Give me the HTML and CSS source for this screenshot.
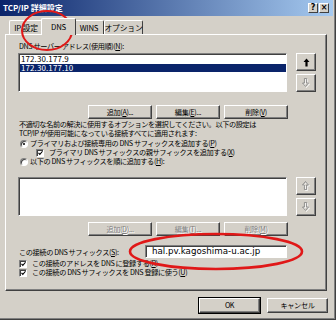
FILE: index.html
```html
<!DOCTYPE html>
<html lang="ja">
<head>
<meta charset="utf-8">
<link rel="stylesheet" href="styles.css">
</head>
<body>
<div class="dialog">
  <div class="titlebar">
    <span class="title">TCP/IP 詳細設定</span>
    <div class="tb-btns"><span class="tb-btn">?</span><span class="tb-btn">×</span></div>
  </div>
  <div class="tabs">
    <div class="tab t1">IP 設定</div>
    <div class="tab t2 active">DNS</div>
    <div class="tab t3">WINS</div>
    <div class="tab t4">オプション</div>
  </div>
  <div class="panel">
    <div class="label">DNS サーバー アドレス(使用順)(<u>N</u>):</div>
    <div class="listrow">
      <div class="listbox">
        <div class="item">172.30.177.9</div>
        <div class="item sel">172.30.177.10</div>
      </div>
      <div class="updown">
        <div class="arrow"><svg width="7" height="9" viewBox="0 0 7 9"><path d="M3.5 0.5 L6.5 4 H4.6 V8.5 H2.4 V4 H0.5 Z" fill="#000"/></svg></div>
        <div class="arrow dis"><svg width="8" height="10" viewBox="0 0 8 10"><path d="M3.5 8.5 L6.5 5 H4.6 V0.5 H2.4 V5 H0.5 Z" transform="translate(1 1)" fill="none" stroke="#fff" stroke-width="0.8"/><path d="M3.5 8.5 L6.5 5 H4.6 V0.5 H2.4 V5 H0.5 Z" fill="none" stroke="#808080" stroke-width="0.8"/></svg></div>
      </div>
    </div>
    <div class="btnrow">
      <div class="btn">追加(<u>A</u>)...</div>
      <div class="btn">編集(<u>E</u>)...</div>
      <div class="btn">削除(<u>V</u>)</div>
    </div>
    <p class="desc">不適切な名前の解決に使用するオプションを選択してください。以下の設定は<br>TCP/IP が使用可能になっている接続すべてに適用されます:</p>
    <div class="opt"><span class="radio on"></span>プライマリおよび接続専用の DNS サフィックスを追加する(<u>P</u>)</div>
    <div class="opt sub"><span class="check"><svg width="6" height="6" viewBox="0 0 6 6"><polyline points="0.6,2.8 2.2,4.6 5.4,0.9" fill="none" stroke="#000" stroke-width="1.3"/></svg></span>プライマリ DNS サフィックスの親サフィックスを追加する(<u>X</u>)</div>
    <div class="opt"><span class="radio"></span>以下の DNS サフィックスを順に追加する(<u>H</u>):</div>
    <div class="listrow second">
      <div class="listbox"></div>
      <div class="updown">
        <div class="arrow dis"><svg width="8" height="10" viewBox="0 0 8 10"><path d="M3.5 0.5 L6.5 4 H4.6 V8.5 H2.4 V4 H0.5 Z" transform="translate(1 1)" fill="none" stroke="#fff" stroke-width="0.8"/><path d="M3.5 0.5 L6.5 4 H4.6 V8.5 H2.4 V4 H0.5 Z" fill="none" stroke="#808080" stroke-width="0.8"/></svg></div>
        <div class="arrow dis"><svg width="8" height="10" viewBox="0 0 8 10"><path d="M3.5 8.5 L6.5 5 H4.6 V0.5 H2.4 V5 H0.5 Z" transform="translate(1 1)" fill="none" stroke="#fff" stroke-width="0.8"/><path d="M3.5 8.5 L6.5 5 H4.6 V0.5 H2.4 V5 H0.5 Z" fill="none" stroke="#808080" stroke-width="0.8"/></svg></div>
      </div>
    </div>
    <div class="btnrow second">
      <div class="btn dis">追加(<u>D</u>)...</div>
      <div class="btn dis">編集(<u>T</u>)...</div>
      <div class="btn dis">削除(<u>M</u>)</div>
    </div>
    <div class="suffix">
      <span>この接続の DNS サフィックス(<u>S</u>):</span>
      <div class="textbox">hal.pv.kagoshima-u.ac.jp</div>
    </div>
    <div class="opt low first"><span class="check"><svg width="6" height="6" viewBox="0 0 6 6"><polyline points="0.6,2.8 2.2,4.6 5.4,0.9" fill="none" stroke="#000" stroke-width="1.3"/></svg></span>この接続のアドレスを DNS に登録する(<u>R</u>)</div>
    <div class="opt low"><span class="check"><svg width="6" height="6" viewBox="0 0 6 6"><polyline points="0.6,2.8 2.2,4.6 5.4,0.9" fill="none" stroke="#000" stroke-width="1.3"/></svg></span>この接続の DNS サフィックスを DNS 登録に使う(<u>U</u>)</div>
  </div>
  <div class="footer">
    <div class="btn big default">OK</div>
    <div class="btn big">キャンセル</div>
  </div>
  <svg class="marks" width="336" height="320" viewBox="0 0 336 320">
    <ellipse cx="47" cy="30.5" rx="25" ry="19.5" fill="none" stroke="#e01818" stroke-width="2"/>
    <ellipse cx="216" cy="251.5" rx="86" ry="17.5" fill="none" stroke="#e01818" stroke-width="2.6"/>
  </svg>
</div>
</body>
</html>
```
FILE: styles.css
```css
html, body {
  margin: 0;
  padding: 0;
}
body {
  width: 336px;
  height: 320px;
  overflow: hidden;
  background: #d4d0c8;
  font-family: "Noto Sans CJK JP", "Noto Sans", sans-serif;
  font-size: 7.2px;
  letter-spacing: -0.4px;
  color: #000;
}
u { text-decoration: underline; text-underline-offset: 1px; }

.dialog {
  position: relative;
  width: 336px;
  height: 320px;
  box-sizing: border-box;
  background: #d4d0c8;
  border-right: 1px solid #404040;
  border-bottom: 1px solid #404040;
  box-shadow: inset -1px -1px #808080;
}

.titlebar {
  height: 16px;
  margin-right: 2px;
  display: flex;
  align-items: center;
  padding: 0 4px 0 3px;
  background: linear-gradient(to right, #0a246a, #a6caf0);
  color: #fff;
  font-weight: bold;
  font-size: 8px;
  letter-spacing: 0;
}
.title { line-height: 16px; }
.tb-btns {
  margin-left: auto;
  display: flex;
  gap: 1px;
}
.tb-btn {
  width: 10px;
  height: 10px;
  box-sizing: border-box;
  background: #d4d0c8;
  border: 1px solid;
  border-color: #fff #404040 #404040 #fff;
  color: #000;
  font-family: "DejaVu Sans", sans-serif;
  font-size: 8px;
  font-weight: bold;
  line-height: 8px;
  text-align: center;
}

.tabs {
  height: 18px;
  display: flex;
  align-items: flex-end;
  padding-left: 9px;
  font-size: 7.8px;
  letter-spacing: -0.2px;
}
.tab {
  position: relative;
  height: 14px;
  box-sizing: border-box;
  border: 1px solid;
  border-color: #fff #404040 transparent #fff;
  border-bottom: none;
  border-radius: 2px 2px 0 0;
  display: flex;
  align-items: center;
  justify-content: center;
  line-height: 9px;
  white-space: nowrap;
}
.t1 { width: 34px; }
.t2 { width: 32px; }
.t3 { width: 30px; }
.t4 { width: 39px; }
.tab.active {
  height: 17px;
  margin: 0 -2px -1px -2px;
  width: 35px;
  background: #d4d0c8;
  z-index: 2;
  padding-bottom: 2px;
}

.panel {
  margin-left: 5px;
  width: 322px;
  height: 257px;
  box-sizing: border-box;
  border: 1px solid;
  border-color: #fff #404040 #404040 #fff;
  box-shadow: inset -1px -1px #808080;
  padding: 7px 0 0 12px;
}
.label { line-height: 9px; padding-left: 1px; white-space: nowrap; }

.listrow {
  display: flex;
  margin-top: 2px;
  height: 39px;
}
.listrow.second { margin-top: 11px; }
.listbox {
  width: 269px;
  height: 39px;
  box-sizing: border-box;
  background: #fff;
  border: 1px solid;
  border-color: #808080 #fff #fff #808080;
  box-shadow: inset 1px 1px #404040;
  padding: 1px 0 0 1px;
}
.item {
  height: 8.5px;
  line-height: 8.5px;
  padding-left: 1px;
  font-size: 8px;
  letter-spacing: 0.1px;
}
.item.sel {
  background: #0a246a;
  color: #fff;
}
.updown {
  margin-left: 9px;
  display: flex;
  flex-direction: column;
  justify-content: space-between;
}
.arrow {
  width: 20px;
  height: 18px;
  box-sizing: border-box;
  border: 1px solid;
  border-color: #fff #404040 #404040 #fff;
  box-shadow: inset -1px -1px #808080;
  display: flex;
  align-items: center;
  justify-content: center;
}
.arrow svg { display: block; }

.btnrow {
  width: 270px;
  display: flex;
  justify-content: flex-end;
  gap: 4px;
  margin-top: 13px;
}
.btnrow.second { margin-top: 6px; }
.btn {
  width: 64px;
  height: 14px;
  box-sizing: border-box;
  border: 1px solid;
  border-color: #fff #404040 #404040 #fff;
  box-shadow: inset -1px -1px #808080;
  display: flex;
  align-items: center;
  justify-content: center;
  line-height: 9px;
  white-space: nowrap;
}
.btn.dis {
  color: #808080;
  text-shadow: 1px 1px 0 #fff;
}

.desc {
  margin: 1px 0 0 0;
  line-height: 9px;
  padding-left: 1px;
  white-space: nowrap;
}
.opt {
  height: 9px;
  line-height: 9px;
  display: flex;
  align-items: center;
  padding-left: 2px;
  white-space: nowrap;
}
.desc + .opt { margin-top: 1px; }
.opt.sub { padding-left: 18px; }
.opt.low { padding-left: 1px; }
.opt.low.first { margin-top: 1px; }

.radio {
  position: relative;
  width: 8px;
  height: 8px;
  box-sizing: border-box;
  border-radius: 50%;
  border: 1px solid;
  border-color: #808080 #fff #fff #808080;
  background: #fff;
  box-shadow: inset 1px 1px #404040;
  margin-right: 2px;
  flex: none;
}
.radio.on::after {
  content: "";
  position: absolute;
  left: 2px;
  top: 2px;
  width: 2px;
  height: 2px;
  border-radius: 50%;
  background: #000;
}
.check {
  width: 8px;
  height: 8px;
  box-sizing: border-box;
  border: 1px solid;
  border-color: #808080 #fff #fff #808080;
  box-shadow: inset 1px 1px #404040;
  background: #fff;
  margin-right: 5px;
  display: flex;
  align-items: center;
  justify-content: center;
  flex: none;
}
.check svg { display: block; margin: 1px 0 0 1px; }

.suffix {
  width: 269px;
  margin-top: 9px;
  height: 13px;
  display: flex;
  align-items: center;
  padding-left: 1px;
  box-sizing: border-box;
  white-space: nowrap;
}
.textbox {
  margin-left: auto;
  width: 142px;
  height: 13px;
  box-sizing: border-box;
  background: #fff;
  border: 1px solid;
  border-color: #808080 #fff #fff #808080;
  box-shadow: inset 1px 1px #404040;
  font-family: "DejaVu Sans", sans-serif;
  font-size: 8.7px;
  letter-spacing: 0;
  line-height: 11px;
  padding-left: 6px;
}

.footer {
  display: flex;
  justify-content: flex-end;
  gap: 7px;
  margin-top: 7px;
  padding-right: 7px;
}
.btn.big {
  width: 61px;
  height: 15px;
}
.btn.default {
  outline: 1px solid #000;
  outline-offset: 0;
}

.marks {
  position: absolute;
  left: 0;
  top: 0;
  pointer-events: none;
}
```
